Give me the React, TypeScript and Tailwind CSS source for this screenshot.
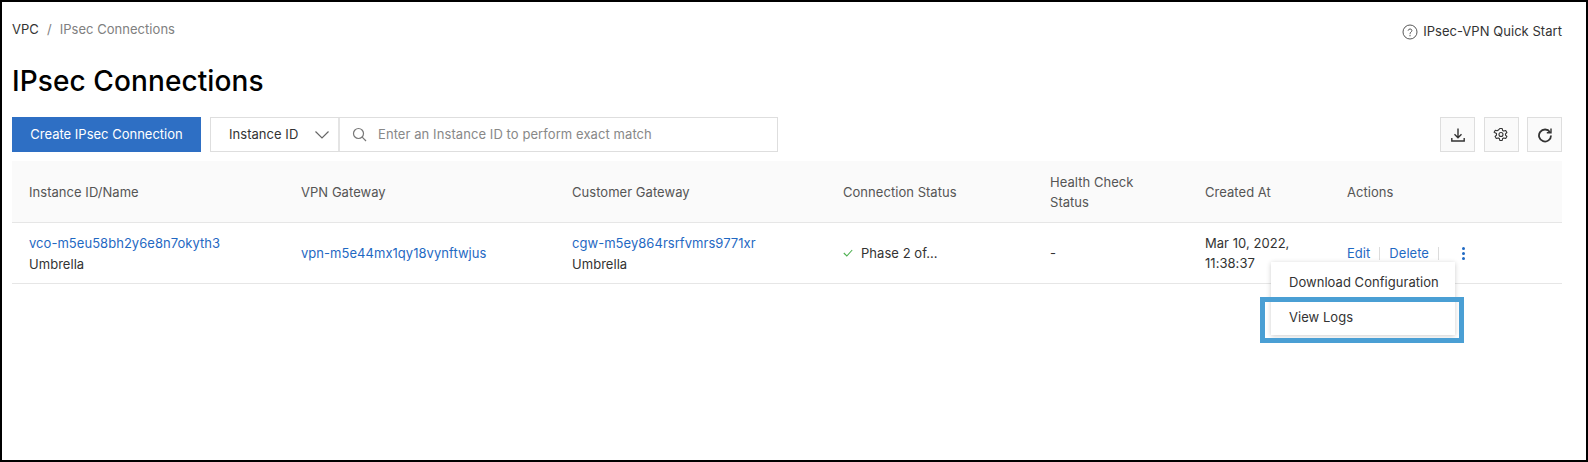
import React from "react";

const font = "font-['Inter','Liberation_Sans',sans-serif]";

function Cell({ children, className = "" }: { children?: React.ReactNode; className?: string }) {
  return <div className={`pl-[17px] pr-2 flex flex-col justify-center ${className}`}>{children}</div>;
}

function IconBtn({ children }: { children: React.ReactNode }) {
  return (
    <button className="w-[35px] h-[35px] border border-[#dedede] bg-[#fafafa] flex items-center justify-center text-[#333]">
      {children}
    </button>
  );
}

export default function App() {
  const cols = "grid grid-cols-[272px_271px_271px_207px_155px_142px_1fr]";
  return (
    <div className={`relative w-[1588px] h-[462px] bg-white border-2 border-black overflow-hidden text-[13px] tracking-[0.04px] text-[#333] ${font}`}>
      <div className="pl-[10px] pr-[24px]">
        <div className="flex items-center justify-between pt-[17px] h-[36px]">
          <div className="flex items-center gap-[8px] leading-[18px]">
            <span className="text-[#333]">VPC</span>
            <span className="text-[#808080]">/</span>
            <span className="text-[#808080]">IPsec Connections</span>
          </div>
          <div className="flex items-center gap-[5px] mt-[6px]">
            <svg width="16" height="16" viewBox="0 0 16 16" fill="none" stroke="#444" strokeWidth="0.9">
              <circle cx="8" cy="8" r="7" />
              <path d="M6.2 6.3a1.9 1.9 0 0 1 3.7 0.3c0 1.3-1.9 1.5-1.9 2.9" strokeLinecap="round" />
              <path d="M8 11.2v0.7" strokeLinecap="round" />
            </svg>
            <span>IPsec-VPN Quick Start</span>
          </div>
        </div>
        <h1 className="mt-[24px] text-[28px] leading-[38px] font-medium text-black tracking-[0.1px]">IPsec Connections</h1>
        <div className="mt-[17px] flex items-center justify-between h-[35px]">
          <div className="flex items-center">
            <button className="w-[189px] h-[35px] bg-[#2e6fc4] text-white tracking-normal">Create IPsec Connection</button>
            <div className="ml-[9px] flex w-[568px] h-[35px] border border-[#dedede]">
              <div className="w-[129px] flex items-center justify-between pl-[18px] pr-[8px] border-r-2 border-[#e4e4e4]">
                <span>Instance ID</span>
                <svg width="16" height="10" viewBox="0 0 16 10" fill="none" stroke="#666" strokeWidth="1.2">
                  <path d="M1.500 1.500L8 8l6.500-6.500" />
                </svg>
              </div>
              <div className="flex-1 flex items-center pl-[12px] gap-[11px] text-[#888] tracking-[0.08px]">
                <svg width="15" height="15" viewBox="0 0 15 15" fill="none" stroke="#777" strokeWidth="1.2">
                  <circle cx="6.500" cy="6.500" r="5" />
                  <path d="M10.200 10.200L14 14" />
                </svg>
                <span>Enter an Instance ID to perform exact match</span>
              </div>
            </div>
          </div>
          <div className="flex items-center gap-[8.5px]">
            <IconBtn>
              <svg width="16" height="16" viewBox="0 0 16 16" fill="none" stroke="#333" strokeWidth="1.4">
                <path d="M8 1.500v9M4.500 7.200L8 10.700l3.500-3.500M1.800 11v3h12.400v-3" />
              </svg>
            </IconBtn>
            <IconBtn>
              <svg width="16" height="16" viewBox="0 0 16 16" fill="none" stroke="#333" strokeWidth="1.1">
                <path d="M6.800 1.500h2.400l.4 1.900 1.300.7 1.800-.6 1.200 2-1.400 1.300v1.400l1.400 1.300-1.200 2-1.800-.6-1.300.7-.4 1.900H6.800l-.4-1.900-1.300-.7-1.800.6-1.200-2 1.400-1.300V6.500L1.100 5.200l1.200-2 1.800.6 1.300-.7z" strokeLinejoin="round" />
                <circle cx="8" cy="7.500" r="2" />
              </svg>
            </IconBtn>
            <IconBtn>
              <svg width="16" height="16" viewBox="0 0 16 16" fill="none" stroke="#333" strokeWidth="1.8">
                <path d="M13 5.200A6 6 0 1 0 14 8.500" />
                <path d="M14 1.500v4.200H9.800" strokeWidth="1.400" />
              </svg>
            </IconBtn>
          </div>
        </div>
        <div className="mt-[9px]">
          <div className={`${cols} h-[62px] bg-[#fafafa] border-b border-[#e6e6e6] text-[#555] leading-[20px]`}>
            <Cell>Instance ID/Name</Cell>
            <Cell>VPN Gateway</Cell>
            <Cell>Customer Gateway</Cell>
            <Cell>Connection Status</Cell>
            <Cell>
              <span>Health Check</span>
              <span>Status</span>
            </Cell>
            <Cell>Created At</Cell>
            <Cell>Actions</Cell>
          </div>
          <div className={`${cols} h-[61px] border-b border-[#e6e6e6] leading-[20px]`}>
            <Cell className="leading-[21px] pt-[2px]">
              <span className="text-[#1f69c3]">vco-m5eu58bh2y6e8n7okyth3</span>
              <span>Umbrella</span>
            </Cell>
            <Cell>
              <span className="text-[#1f69c3]">vpn-m5e44mx1qy18vynftwjus</span>
            </Cell>
            <Cell className="leading-[21px] pt-[2px]">
              <span className="text-[#1f69c3]">cgw-m5ey864rsrfvmrs9771xr</span>
              <span>Umbrella</span>
            </Cell>
            <Cell>
              <div className="flex items-center gap-[8px]">
                <svg width="10" height="8" viewBox="0 0 10 8" fill="none" stroke="#4cb04f" strokeWidth="1.1">
                  <path d="M0.800 4l3 3L9.200 1" />
                </svg>
                <span>Phase 2 of...</span>
              </div>
            </Cell>
            <Cell>-</Cell>
            <Cell>
              <span>Mar 10, 2022,</span>
              <span>11:38:37</span>
            </Cell>
            <Cell>
              <div className="flex items-center text-[#1f69c3]">
                <span>Edit</span>
                <span className="mx-[9px] w-px h-[13px] bg-[#dcdcdc]" />
                <span>Delete</span>
                <span className="mx-[9px] w-px h-[13px] bg-[#dcdcdc]" />
                <span className="ml-[14px] flex flex-col gap-[2px]">
                  <span className="w-[3px] h-[3px] rounded-full bg-[#1f69c3]" />
                  <span className="w-[3px] h-[3px] rounded-full bg-[#1f69c3]" />
                  <span className="w-[3px] h-[3px] rounded-full bg-[#1f69c3]" />
                </span>
              </div>
            </Cell>
          </div>
        </div>
      </div>
      <div className="absolute left-[1269px] top-[260px] w-[184px] h-[73px] pt-[3px] bg-white shadow-[0_1px_5px_rgba(0,0,0,0.2)] text-[#333]">
        <div className="h-[35px] pl-[18px] flex items-center">Download Configuration</div>
        <div className="h-[35px] pl-[18px] flex items-center">View Logs</div>
      </div>
      <div className="absolute left-[1258px] top-[295px] w-[204px] h-[46px] border-[5px] border-[#4a9fd4]" />
    </div>
  );
}
